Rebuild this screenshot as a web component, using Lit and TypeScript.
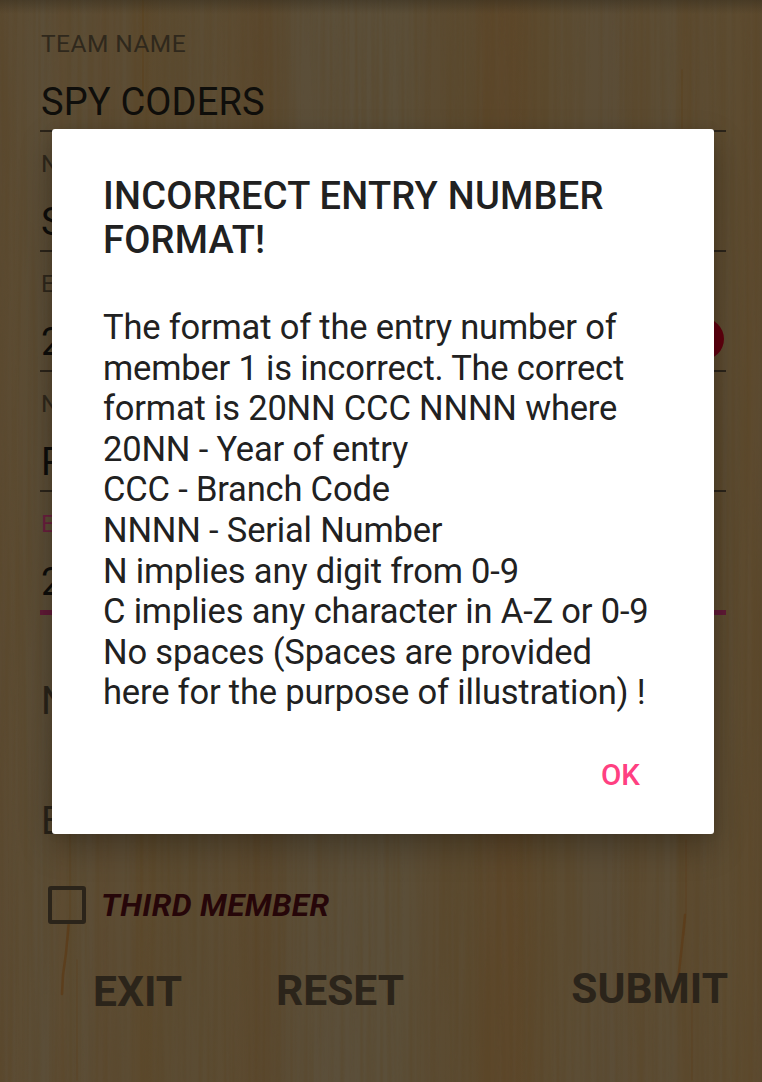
import { LitElement, html, css, svg, nothing } from "lit";
import { customElement, property } from "lit/decorators.js";

@customElement("wood-background")
class WoodBackground extends LitElement {
  static styles = css`
    :host { display: block; }
    svg { display: block; width: 100%; height: 100%; }
  `;
  private bands: [number, string][] = [
    [0, "#5b4a31"], [20, "#5c4c33"], [45, "#5b4e38"], [62, "#5d4b31"], [70, "#5b4b31"],
    [85, "#5c4e37"], [104, "#5c4a30"], [125, "#5c4d35"], [142, "#5c492c"], [165, "#5b4b31"],
    [200, "#5b4c33"], [235, "#5c4b31"], [262, "#5a472c"], [278, "#5a4a31"], [300, "#5b4e38"],
    [340, "#5b4f3a"], [400, "#5b4f39"], [430, "#5b4b32"], [470, "#5b4a2f"], [486, "#5c472a"],
    [510, "#5d472a"], [528, "#5c482b"], [550, "#5c4b30"], [580, "#5c4d35"], [610, "#5b4d37"],
    [640, "#5c4b31"], [670, "#5c4e37"], [684, "#5c492d"], [700, "#5c4b31"], [730, "#5d4c31"],
    [750, "#5d4a2e"], [762, "#5b492e"],
  ];
  render() {
    return html`<svg viewBox="0 0 762 1082" preserveAspectRatio="none">
      <defs>
        <linearGradient id="bands" x1="0" x2="1" y1="0" y2="0">
          ${this.bands.map(([x, c]) => svg`<stop offset=${x / 762} stop-color=${c}></stop>`)}
        </linearGradient>
        <linearGradient id="top" x1="0" x2="0" y1="0" y2="1">
          <stop offset="0" stop-color="#2b2519" stop-opacity=".4"></stop>
          <stop offset="1" stop-color="#2b2519" stop-opacity="0"></stop>
        </linearGradient>
        <filter id="grain" x="0" y="0" width="100%" height="100%" color-interpolation-filters="sRGB">
          <feTurbulence type="fractalNoise" baseFrequency="0.22 0.004" numOctaves="2" seed="8"></feTurbulence>
          <feColorMatrix values="0 0 0 0 .35  0 0 0 0 .265  0 0 0 0 .14  1.8 0 0 0 -.7"></feColorMatrix>
        </filter>
        <filter id="pale" x="0" y="0" width="100%" height="100%" color-interpolation-filters="sRGB">
          <feTurbulence type="fractalNoise" baseFrequency="0.17 0.003" numOctaves="2" seed="21"></feTurbulence>
          <feColorMatrix values="0 0 0 0 .36  0 0 0 0 .31  0 0 0 0 .23  1.8 0 0 0 -.75"></feColorMatrix>
        </filter>
      </defs>
      <rect width="762" height="1082" fill="url(#bands)"></rect>
      <rect width="762" height="1082" filter="url(#pale)" opacity=".4"></rect>
      <rect width="762" height="1082" filter="url(#grain)" opacity=".45"></rect>
      <g fill="none" stroke="#5c3b17" stroke-linecap="round">
        <path d="M70 830V915L68 940" stroke-width="1.5" opacity=".25"></path>
        <path d="M68.5 925L66 953L63 975L62 994" stroke-width="2.5" opacity=".75"></path>
        <path d="M77 960V1080" stroke-width="1.5" opacity=".3"></path>
        <path d="M686 840V910L684 935" stroke-width="1.5" opacity=".3"></path>
        <path d="M685 915L682 945L679 972L677 990" stroke-width="2.5" opacity=".7"></path>
        <path d="M692 1000V1080" stroke-width="1.5" opacity=".3"></path>
        <path d="M143 0V110" stroke-width="1.5" opacity=".4"></path>
        <path d="M682 70V128" stroke-width="1.5" opacity=".4"></path>
      </g>
      <rect width="762" height="14" fill="url(#top)"></rect>
    </svg>`;
  }
}

@customElement("form-field")
class FormField extends LitElement {
  @property() label = "";
  @property() value = "";
  @property({ type: Boolean, reflect: true }) active = false;
  @property({ type: Boolean }) error = false;
  static styles = css`
    :host { display: flex; flex-direction: column; height: 120px; box-sizing: border-box; border-bottom: 2px solid #2b241a; padding-left: 1px; }
    .label { font-size: 24.5px; letter-spacing: .45px; line-height: 28px; margin-top: 18px; color: #2f281c; white-space: nowrap; }
    .row { display: flex; justify-content: space-between; align-items: center; margin-top: 22px; height: 44px; margin-right: 2px; }
    .value { font-size: 38px; letter-spacing: .15px; line-height: 44px; color: #0f0e0b; white-space: nowrap; }
    .dot { width: 42px; height: 42px; border-radius: 50%; background: #60000f; margin-top: -6px; }
    :host([active]) { border-bottom: 5px solid #601a36; height: 123px; }
    :host([active]) .label { color: #6a1f3e; }
  `;
  render() {
    return html`<div class="label">${this.label}</div>
      <div class="row"><span class="value">${this.value}</span>${this.error ? html`<span class="dot"></span>` : nothing}</div>`;
  }
}

@customElement("alert-dialog")
class AlertDialog extends LitElement {
  static styles = css`
    :host { display: flex; flex-direction: column; box-sizing: border-box; background: #fff; color: #212121;
      border-radius: 3px; padding: 46px 51px 0 51px; box-shadow: 0 14px 32px rgba(0,0,0,.26), 0 0 12px rgba(0,0,0,.08); }
    .title { margin: 0; font-size: 38px; font-weight: 500; letter-spacing: .25px; line-height: 43.5px; white-space: nowrap; }
    .message { margin: 45px 0 0; font-size: 34.5px; letter-spacing: -.18px; line-height: 40.6px; white-space: nowrap; }
    .actions { display: flex; justify-content: flex-end; margin-top: 44px; padding-right: 23px; }
    .ok { font: 500 29.5px/36px Roboto, sans-serif; color: #ff4081; background: none; border: 0; padding: 0; }
  `;
  private lines = [
    "The format of the entry number of", "member 1 is incorrect. The correct", "format is 20NN CCC NNNN where",
    "20NN - Year of entry", "CCC - Branch Code", "NNNN - Serial Number", "N implies any digit from 0-9",
    "C implies any character in A-Z or 0-9", "No spaces (Spaces are provided", "here for the purpose of illustration) !",
  ];
  render() {
    return html`<h2 class="title">INCORRECT ENTRY NUMBER<br />FORMAT!</h2>
      <p class="message">${this.lines.map((l, i) => html`${i ? html`<br />` : nothing}${l}`)}</p>
      <div class="actions"><button class="ok">OK</button></div>`;
  }
}

@customElement("app-root")
class AppRoot extends LitElement {
  static styles = css`
    :host { display: block; position: relative; width: 762px; height: 1082px; overflow: hidden; font-family: Roboto, sans-serif; }
    .wood { position: absolute; inset: 0; }
    .form { position: relative; display: flex; flex-direction: column; padding: 12px 36px 0 40px; }
    .hint { height: 120px; padding-left: 1px; font-size: 38px; line-height: 44px; color: #292319; }
    .hint.first { margin-top: 64px; }
    .check { display: flex; align-items: center; gap: 15px; margin-top: -33px; padding-left: 8px; height: 38px; }
    .box { box-sizing: border-box; width: 38px; height: 38px; border: 4px solid #2b241a; border-radius: 3px; }
    .third { font-size: 31.5px; letter-spacing: .4px; font-weight: 700; font-style: italic; line-height: 36px; margin-top: 2px; color: #260609; white-space: nowrap; }
    .buttons { display: flex; align-items: flex-start; margin-top: 40px; padding-left: 53px; }
    .btn { font: 700 42.5px/50px Roboto, sans-serif; color: #2b241a; background: none; border: 0; padding: 0; margin: 0; white-space: nowrap; }
    .exit { margin-top: 3px; }
    .reset { margin: 2px 0 0 94px; }
    .submit { margin-left: auto; margin-right: -2px; }
    .dialog { position: absolute; left: 52px; top: 129px; width: 662px; height: 705px; }
  `;
  render() {
    return html`<wood-background class="wood"></wood-background>
      <div class="form">
        <form-field label="TEAM NAME" value="SPY CODERS"></form-field>
        <form-field label="N" value="S"></form-field>
        <form-field label="E" value="2" error></form-field>
        <form-field label="N" value="P"></form-field>
        <form-field label="E" value="2" active></form-field>
        <div class="hint first">N</div>
        <div class="hint">E</div>
        <div class="check"><span class="box"></span><span class="third">THIRD MEMBER</span></div>
        <div class="buttons">
          <button class="btn exit">EXIT</button>
          <button class="btn reset">RESET</button>
          <button class="btn submit">SUBMIT</button>
        </div>
      </div>
      <alert-dialog class="dialog"></alert-dialog>`;
  }
}
